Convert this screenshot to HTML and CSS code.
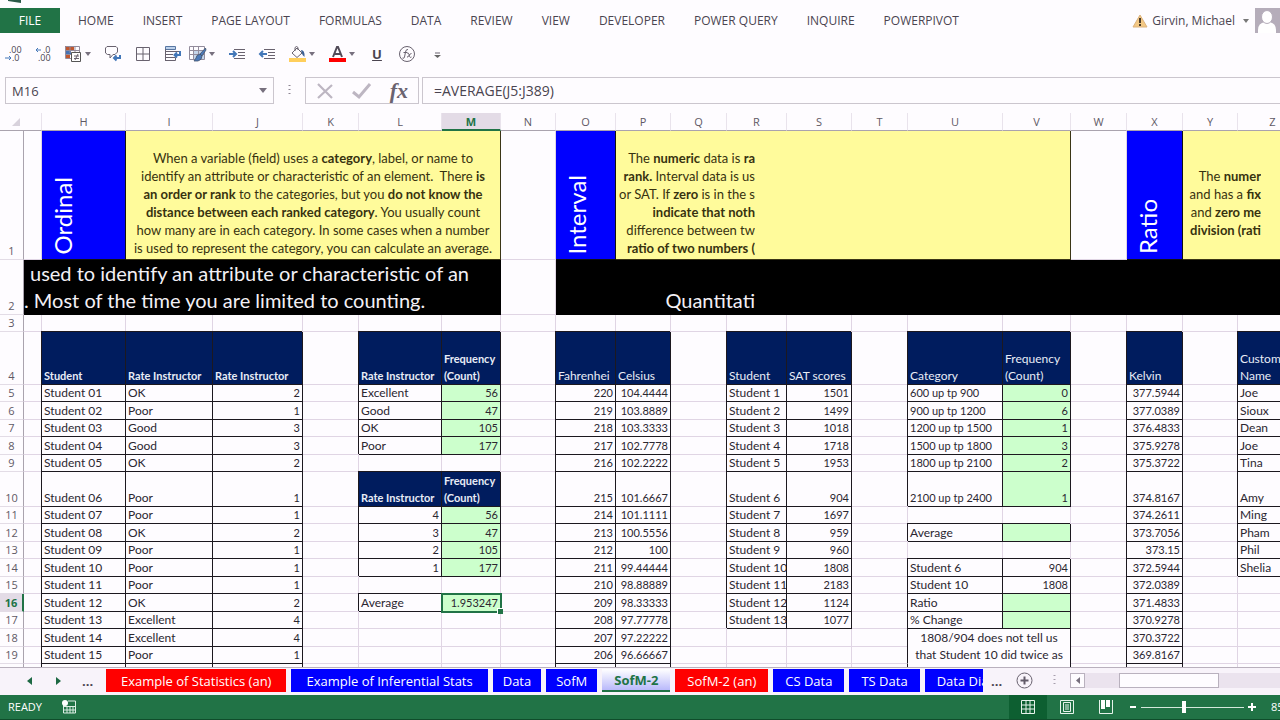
FILE: index.html
```html
<!DOCTYPE html>
<html lang="en">
<head>
<meta charset="utf-8">
<title>Workbook - SofM-2</title>
<link rel="stylesheet" href="styles.css">
</head>
<body>
<header class="ribbon">
  <div class="titlebar"><svg width="14" height="3" viewBox="0 0 14 3"><path d="M0 0h13v3L0 1z" fill="#2b5a48"/></svg></div>
  <div class="ribbon-row">
    <button class="file">FILE</button>
    <nav class="ribbon-tabs">
      <button>HOME</button><button>INSERT</button><button>PAGE LAYOUT</button><button>FORMULAS</button><button>DATA</button><button>REVIEW</button><button>VIEW</button><button>DEVELOPER</button><button>POWER QUERY</button><button>INQUIRE</button><button>POWERPIVOT</button>
    </nav>
    <div class="account">
      <svg width="16" height="14" viewBox="0 0 16 14"><path d="M8 1L15 13H1z" fill="#f3c884" stroke="#dcb27c"/><path d="M7 4h2v5H7zM7 10h2v2H7z" fill="#4a3a28"/></svg>
      <button class="user">Girvin, Michael<svg width="6" height="4" viewBox="0 0 6 4"><path d="M0 0h6L3 4z" fill="#777"/></svg></button>
      <svg class="avatar" width="25" height="25" viewBox="0 0 25 25"><path d="M0 0h25v25H0z" fill="#b5adba"/><path d="M3 25v-3q0-7 7-8h4q7 1 7 8v3z" fill="#fff"/><ellipse cx="12" cy="9" rx="5.500" ry="6.500" fill="#fff" stroke="#b5adba"/></svg>
    </div>
  </div>
  <div class="quick">
    <button aria-label="Decrease decimal"><svg width="16" height="16" viewBox="0 0 16 16"><g class="digits"><text x="4" y="7">.00</text><text x="7" y="15">.0</text></g><path d="M0 12h6M4 10l2 2-2 2" class="blue"/></svg></button>
    <button aria-label="Increase decimal"><svg width="16" height="16" viewBox="0 0 16 16"><g class="digits"><text x="8" y="7">.0</text><text x="3" y="15">.00</text></g><path d="M6 4H1M3 2L1 4l2 2" class="blue"/></svg></button>
    <button class="split" aria-label="Conditional formatting"><svg width="16" height="16" viewBox="0 0 16 16"><path d="M0 0h9v4H0zM0 8h5v4H0z" fill="#c0572f"/><path d="M0 4h6v4H0z" fill="#4573b5"/><path d="M.5.5h14v6M.5.5v12H6M5 0v7M10 0v6M0 4.500h14M0 8.500h6" class="thin"/><path d="M6.500 6.500h9v9h-9z" fill="#fff" stroke="#555"/><path d="M9 10h5M9 12.500h5M13 8l-3 6" class="line"/></svg><i class="caret"></i></button>
    <button aria-label="Comment"><svg width="16" height="16" viewBox="0 0 16 16"><path d="M4 8.500H2.500L.500 7V2L2 .500h9L12.500 2v4L10 8.500H8L5 12V8.500z" class="line"/><path d="M15 9v3H9M11.500 9.500L9 12l2.500 2.500" class="blue bold"/></svg></button>
    <button aria-label="Borders"><svg width="16" height="16" viewBox="0 0 16 16"><path d="M1.500 1.500h13v13h-13zM8 1v14M1 8h14" class="line"/></svg></button>
    <div class="pair">
      <button aria-label="Wrap text"><svg width="16" height="16" viewBox="0 0 16 16"><path d="M.500.500h10v3H.500z" fill="#bcd0ea" stroke="#5876a2"/><path d="M.500 5.500h14M.500 8.500H8M.500 11.500h10v3H.500zM.500 3v12" class="line"/><path d="M15 5v4h-5M12 6.500L9.500 9l2.500 2.500" class="blue bold"/></svg></button>
      <button class="split" aria-label="Format as table"><svg width="18" height="16" viewBox="0 0 18 16"><path d="M.500.500h15v13H.500z" class="thin"/><path d="M4 4h11v9H4z" fill="#c5d5ea"/><path d="M0 4.500h15M4.500 0v14M9.500 0v14M0 8.500h15" class="thin"/><path d="M16.500 2L11 8l2 2 4-6zM11 8q-4 1-4 4l-2 3h4q4-1 4-5z" fill="#4c79b8" stroke="#44546c" stroke-width=".8"/></svg><i class="caret"></i></button>
    </div>
    <button aria-label="Increase indent"><svg width="16" height="16" viewBox="0 0 16 16"><path d="M5 3.500h11M9 6.500h7M9 9.500h7M5 12.500h11" class="line"/><path d="M0 8h7M4 5l3 3-3 3" class="blue bold"/></svg></button>
    <button aria-label="Decrease indent"><svg width="16" height="16" viewBox="0 0 16 16"><path d="M5 3.500h11M9 6.500h7M9 9.500h7M5 12.500h11" class="line"/><path d="M8 8H1M4 5L1 8l3 3" class="blue bold"/></svg></button>
    <button class="split" aria-label="Fill color"><svg width="17" height="16" viewBox="0 0 17 16"><path d="M3 7l5-5 5 5-5 4.500zM6 5V1.500Q7.500-.500 9 1.500V4" class="line"/><path d="M12 4q4 0 3.500 7Q13 9 12.500 6z" fill="#3d6295"/><path d="M0 12h17v4H0z" fill="#ffcf5c"/></svg><i class="caret"></i></button>
    <button class="split" aria-label="Font color"><svg width="17" height="16" viewBox="0 0 17 16"><path d="M4 11L8 1h1l4 10M5.500 8h6" fill="none" stroke="#514b58" stroke-width="2"/><path d="M0 12h17v4H0z" fill="#f00"/></svg><i class="caret"></i></button>
    <button class="underline" aria-label="Underline">U</button>
    <button aria-label="Insert function"><svg width="16" height="16" viewBox="0 0 16 16"><circle cx="8" cy="8" r="7.500" class="line"/><path d="M9 3.500Q7 3 6.500 6L5.500 11Q5 13 3.500 12M4.500 6.500h4M8.500 7.500q1-1 1.500 1l.5 2q.5 1.500 2 .5M12.500 7.500q-1.500 0-2.500 2t-2 1.500" class="line"/></svg></button>
    <button aria-label="Customize toolbar"><svg width="16" height="16" viewBox="0 0 16 16"><path d="M6 7h5" class="line"/><path d="M5 9h7l-3.500 3z" fill="#666"/></svg></button>
  </div>
</header>
<section class="formula-row">
  <div class="namebox"><input type="text" value="M16" aria-label="Name box"><button aria-label="Show names"><svg width="8" height="5" viewBox="0 0 8 5"><path d="M0 0h8L4 5z" fill="#77707e"/></svg></button></div>
  <svg class="grip" width="3" height="14" viewBox="0 0 3 14"><path d="M1.500 1v12" stroke="#8d8693" stroke-width="2" stroke-dasharray="1 3"/></svg>
  <div class="fx-buttons">
    <button aria-label="Cancel"><svg width="18" height="18" viewBox="0 0 18 18"><path d="M2 2l14 14M16 3L2 16" fill="none" stroke="#bdb6c2" stroke-width="2.200"/></svg></button>
    <button aria-label="Enter"><svg width="20" height="18" viewBox="0 0 20 18"><path d="M1 10l6 5L18 2" fill="none" stroke="#bdb6c2" stroke-width="3"/></svg></button>
    <button class="fx" aria-label="Insert function">fx</button>
  </div>
  <input class="formula" type="text" value="=AVERAGE(J5:J389)" aria-label="Formula bar">
</section>
<main class="sheet">
<table>
<colgroup><col class="w24"><col class="w18"><col class="w84"><col class="w87"><col class="w90"><col class="w56"><col class="w83"><col class="w59"><col class="w55"><col class="w60"><col class="w55"><col class="w56"><col class="w60"><col class="w65"><col class="w56"><col class="w95"><col class="w68"><col class="w56"><col class="w56"><col class="w55"><col class="w70"></colgroup>
<thead>
<tr><th class="corner"><svg width="8" height="8" viewBox="0 0 8 8"><path d="M8 0v8H0z" fill="#d8d2dc"/></svg></th><th></th><th>H</th><th>I</th><th>J</th><th>K</th><th>L</th><th class="active">M</th><th>N</th><th>O</th><th>P</th><th>Q</th><th>R</th><th>S</th><th>T</th><th>U</th><th>V</th><th>W</th><th>X</th><th>Y</th><th>Z</th></tr>
</thead>
<tbody>
<tr class="row-notes"><th>1</th><td></td><td class="scale"><span>Ordinal</span></td>
<td class="note" colspan="5">When a variable (field) uses a <b>category</b>, label, or name to<br>identify an attribute or characteristic of an element.&nbsp; There <b>is</b><br><b>an order or rank</b> to the categories, but you <b>do not know the</b><br><b>distance between each ranked category</b>. You usually count<br>how many are in each category. In some cases when a number<br>is used to represent the category, you can calculate an average.</td>
<td></td><td class="scale"><span>Interval</span></td>
<td class="note" colspan="7"><div class="clip clip-interval">The <b>numeric</b> data is <b>ra</b><br><b>rank.</b> Interval data is us<br>or SAT. If <b>zero</b> is in the s<br><b>indicate that noth</b><br>difference between tw<br><b>ratio of two numbers (</b></div></td>
<td></td><td class="scale"><span>Ratio</span></td>
<td class="note" colspan="2"><div class="clip clip-ratio">The <b>numer</b><br>and has a <b>fix</b><br>and <b>zero me</b><br><b>division (rati</b></div></td></tr>
<tr class="row-band"><th>2</th><td class="band" colspan="7"><span class="indent">used to identify an attribute or characteristic of an</span><br>. Most of the time you are limited to counting.</td><td></td><td class="band" colspan="12"><div class="clip clip-band">Quantitati</div></td></tr>
<tr><th>3</th><td></td><td></td><td></td><td></td><td></td><td></td><td></td><td></td><td></td><td></td><td></td><td></td><td></td><td></td><td></td><td></td><td></td><td></td><td></td><td></td></tr>
<tr class="row-head"><th>4</th><td></td><td class="head strong">Student</td><td class="head strong">Rate Instructor</td><td class="head strong">Rate Instructor</td><td></td><td class="head strong">Rate Instructor</td><td class="head strong">Frequency<br>(Count)</td><td></td><td class="head">Fahrenhei</td><td class="head">Celsius</td><td></td><td class="head">Student</td><td class="head">SAT scores</td><td></td><td class="head">Category</td><td class="head">Frequency<br>(Count)</td><td></td><td class="head">Kelvin</td><td></td><td class="head">Customer<br>Name</td></tr>
<tr><th>5</th><td></td><td class="box">Student 01</td><td class="box">OK</td><td class="box num">2</td><td></td><td class="box">Excellent</td><td class="box num calc">56</td><td></td><td class="box num">220</td><td class="box num">104.4444</td><td></td><td class="box">Student 1</td><td class="box num">1501</td><td></td><td class="box range">600 up tp 900</td><td class="box num calc">0</td><td></td><td class="box num">377.5944</td><td></td><td class="box">Joe</td></tr>
<tr><th>6</th><td></td><td class="box">Student 02</td><td class="box">Poor</td><td class="box num">1</td><td></td><td class="box">Good</td><td class="box num calc">47</td><td></td><td class="box num">219</td><td class="box num">103.8889</td><td></td><td class="box">Student 2</td><td class="box num">1499</td><td></td><td class="box range">900 up tp 1200</td><td class="box num calc">6</td><td></td><td class="box num">377.0389</td><td></td><td class="box">Sioux</td></tr>
<tr><th>7</th><td></td><td class="box">Student 03</td><td class="box">Good</td><td class="box num">3</td><td></td><td class="box">OK</td><td class="box num calc">105</td><td></td><td class="box num">218</td><td class="box num">103.3333</td><td></td><td class="box">Student 3</td><td class="box num">1018</td><td></td><td class="box range">1200 up tp 1500</td><td class="box num calc">1</td><td></td><td class="box num">376.4833</td><td></td><td class="box">Dean</td></tr>
<tr><th>8</th><td></td><td class="box">Student 04</td><td class="box">Good</td><td class="box num">3</td><td></td><td class="box">Poor</td><td class="box num calc">177</td><td></td><td class="box num">217</td><td class="box num">102.7778</td><td></td><td class="box">Student 4</td><td class="box num">1718</td><td></td><td class="box range">1500 up tp 1800</td><td class="box num calc">3</td><td></td><td class="box num">375.9278</td><td></td><td class="box">Joe</td></tr>
<tr><th>9</th><td></td><td class="box">Student 05</td><td class="box">OK</td><td class="box num">2</td><td></td><td></td><td></td><td></td><td class="box num">216</td><td class="box num">102.2222</td><td></td><td class="box">Student 5</td><td class="box num">1953</td><td></td><td class="box range">1800 up tp 2100</td><td class="box num calc">2</td><td></td><td class="box num">375.3722</td><td></td><td class="box">Tina</td></tr>
<tr class="row-tall"><th>10</th><td></td><td class="box">Student 06</td><td class="box">Poor</td><td class="box num">1</td><td></td><td class="head strong">Rate Instructor</td><td class="head strong">Frequency<br>(Count)</td><td></td><td class="box num">215</td><td class="box num">101.6667</td><td></td><td class="box">Student 6</td><td class="box num">904</td><td></td><td class="box range">2100 up tp 2400</td><td class="box num calc">1</td><td></td><td class="box num">374.8167</td><td></td><td class="box">Amy</td></tr>
<tr><th>11</th><td></td><td class="box">Student 07</td><td class="box">Poor</td><td class="box num">1</td><td></td><td class="box num">4</td><td class="box num calc">56</td><td></td><td class="box num">214</td><td class="box num">101.1111</td><td></td><td class="box">Student 7</td><td class="box num">1697</td><td></td><td></td><td></td><td></td><td class="box num">374.2611</td><td></td><td class="box">Ming</td></tr>
<tr><th>12</th><td></td><td class="box">Student 08</td><td class="box">OK</td><td class="box num">2</td><td></td><td class="box num">3</td><td class="box num calc">47</td><td></td><td class="box num">213</td><td class="box num">100.5556</td><td></td><td class="box">Student 8</td><td class="box num">959</td><td></td><td class="box">Average</td><td class="box calc"></td><td></td><td class="box num">373.7056</td><td></td><td class="box">Pham</td></tr>
<tr><th>13</th><td></td><td class="box">Student 09</td><td class="box">Poor</td><td class="box num">1</td><td></td><td class="box num">2</td><td class="box num calc">105</td><td></td><td class="box num">212</td><td class="box num">100</td><td></td><td class="box">Student 9</td><td class="box num">960</td><td></td><td></td><td></td><td></td><td class="box num">373.15</td><td></td><td class="box">Phil</td></tr>
<tr><th>14</th><td></td><td class="box">Student 10</td><td class="box">Poor</td><td class="box num">1</td><td></td><td class="box num">1</td><td class="box num calc">177</td><td></td><td class="box num">211</td><td class="box num">99.44444</td><td></td><td class="box">Student 10</td><td class="box num">1808</td><td></td><td class="box">Student 6</td><td class="box num">904</td><td></td><td class="box num">372.5944</td><td></td><td class="box">Shelia</td></tr>
<tr><th>15</th><td></td><td class="box">Student 11</td><td class="box">Poor</td><td class="box num">1</td><td></td><td></td><td></td><td></td><td class="box num">210</td><td class="box num">98.88889</td><td></td><td class="box">Student 11</td><td class="box num">2183</td><td></td><td class="box">Student 10</td><td class="box num">1808</td><td></td><td class="box num">372.0389</td><td></td><td></td></tr>
<tr><th class="active">16</th><td></td><td class="box">Student 12</td><td class="box">OK</td><td class="box num">2</td><td></td><td class="box">Average</td><td class="box num calc selected">1.953247</td><td></td><td class="box num">209</td><td class="box num">98.33333</td><td></td><td class="box">Student 12</td><td class="box num">1124</td><td></td><td class="box">Ratio</td><td class="box calc"></td><td></td><td class="box num">371.4833</td><td></td><td></td></tr>
<tr><th>17</th><td></td><td class="box">Student 13</td><td class="box">Excellent</td><td class="box num">4</td><td></td><td></td><td></td><td></td><td class="box num">208</td><td class="box num">97.77778</td><td></td><td class="box">Student 13</td><td class="box num">1077</td><td></td><td class="box">% Change</td><td class="box calc"></td><td></td><td class="box num">370.9278</td><td></td><td></td></tr>
<tr><th>18</th><td></td><td class="box">Student 14</td><td class="box">Excellent</td><td class="box num">4</td><td></td><td></td><td></td><td></td><td class="box num">207</td><td class="box num">97.22222</td><td></td><td></td><td></td><td class="edge"></td><td class="box remark" colspan="2" rowspan="3">1808/904 does not tell us<br>that Student 10 did twice as</td><td></td><td class="box num">370.3722</td><td></td><td></td></tr>
<tr><th>19</th><td></td><td class="box">Student 15</td><td class="box">Poor</td><td class="box num">1</td><td></td><td></td><td></td><td></td><td class="box num">206</td><td class="box num">96.66667</td><td></td><td></td><td></td><td class="edge"></td><td></td><td class="box num">369.8167</td><td></td><td></td></tr>
<tr><th></th><td></td><td class="box"></td><td class="box"></td><td class="box"></td><td></td><td></td><td></td><td></td><td class="box"></td><td class="box"></td><td></td><td></td><td></td><td class="edge"></td><td></td><td class="box"></td><td></td><td></td></tr>
</tbody>
</table>
</main>
<nav class="sheetbar">
  <div class="sheet-nav">
    <button aria-label="Previous sheet"><svg width="5" height="8" viewBox="0 0 5 8"><path d="M5 0v8L0 4z" fill="#1d6843"/></svg></button>
    <button aria-label="Next sheet"><svg width="5" height="8" viewBox="0 0 5 8"><path d="M0 0v8l5-4z" fill="#1d6843"/></svg></button>
    <button class="more">...</button>
  </div>
  <div class="tabs">
    <button class="tab red wide">Example of Statistics (an)</button><button class="tab wide">Example of Inferential Stats</button><button class="tab">Data</button><button class="tab">SofM</button><button class="tab medium current">SofM-2</button><button class="tab medium red">SofM-2 (an)</button><button class="tab medium">CS Data</button><button class="tab medium">TS Data</button><button class="tab medium">Data Diagram</button>
  </div>
  <div class="sheet-end">
    <button class="more">...</button>
    <button aria-label="New sheet"><svg width="17" height="17" viewBox="0 0 17 17"><circle cx="8.500" cy="8.500" r="7.500" class="line"/><path d="M8.500 4.500v8M4.500 8.500h8" fill="none" stroke="#625b69" stroke-width="2"/></svg></button>
    <svg class="divider" width="3" height="14" viewBox="0 0 3 14"><path d="M1.500 1v12" stroke="#a79fad" stroke-width="2" stroke-dasharray="1 3"/></svg>
    <div class="scrollbar"><button aria-label="Scroll left"><svg width="4" height="7" viewBox="0 0 4 7"><path d="M4 0v7L0 3.500z" fill="#77707e"/></svg></button><div class="track"><div class="thumb"></div></div></div>
  </div>
</nav>
<footer class="status">
  <span>READY</span>
  <svg class="macro" width="14" height="14" viewBox="0 0 14 14"><path d="M1.500 4v9h12V1H6M2 6.500h11M5 6v7M8 6v7M11 6v7M2 10h11" fill="none" stroke="#dceee4"/><circle cx="3" cy="3" r="3" fill="#fff"/></svg>
  <div class="views">
    <button class="on" aria-label="Normal"><svg width="14" height="14" viewBox="0 0 14 14"><path d="M.500.500h13v13H.500zM5 0v14M9 0v14M0 5h14M0 9h14" class="white"/></svg></button>
    <button aria-label="Page layout"><svg width="14" height="14" viewBox="0 0 14 14"><path d="M.500.500h13v13H.500zM3.500 2.500h7v9h-7zM5 5h4M5 7h4M5 9h4" class="white"/></svg></button>
    <button aria-label="Page break preview"><svg width="14" height="14" viewBox="0 0 14 14"><path d="M.500 0v13.500h13V0" class="white"/><path d="M2 0h4v9H2zM7 0h4v7H7z" fill="#fff"/></svg></button>
  </div>
  <div class="zoom">
    <button aria-label="Zoom out"><svg width="8" height="8" viewBox="0 0 8 8"><path d="M1 4h6" stroke="#fff" stroke-width="2"/></svg></button><input type="range" min="0" max="100" value="41" aria-label="Zoom"><button aria-label="Zoom in"><svg width="8" height="8" viewBox="0 0 8 8"><path d="M0 4h8M4 0v8" stroke="#fff" stroke-width="2"/></svg></button>
    <span class="percent">85%</span>
  </div>
</footer>
</body>
</html>
```
FILE: styles.css
```css
* { box-sizing: border-box; }
body {
  margin: 0;
  height: 100vh;
  display: flex;
  flex-direction: column;
  overflow: hidden;
  background: #fefcff;
  color: #4a4450;
  font: 12px/16px "Open Sans", "Noto Sans", sans-serif;
}
button, input { font: inherit; color: inherit; border: 0; padding: 0; margin: 0; background: none; }
button { display: flex; align-items: center; justify-content: center; white-space: nowrap; }
svg { display: block; flex: none; overflow: visible; }

.line { fill: none; stroke: #69626f; }
.thin { fill: none; stroke: #938c9c; }
.blue { fill: none; stroke: #4377b8; }
.bold { stroke-width: 2; }
.white { fill: none; stroke: #e6f3eb; }
.digits { font-size: 9px; fill: #4a4450; }

/* Ribbon */
.ribbon { flex: none; }
.titlebar { height: 8px; padding-left: 8px; overflow: hidden; }
.ribbon-row { display: flex; height: 25px; align-items: stretch; }
.file { width: 60px; background: #217346; color: #fff; }
.ribbon-tabs { display: flex; gap: 29px; padding-left: 18px; }
.account { display: flex; align-items: center; margin-left: auto; gap: 4px; }
.user { gap: 8px; }
.avatar { margin-left: 2px; }
.quick { display: flex; align-items: center; height: 44px; gap: 14px; padding-left: 5px; padding-bottom: 2px; }
.quick button { width: 16px; height: 20px; }
.quick .split { width: 26px; justify-content: space-between; }
.quick .underline { font-weight: 700; font-size: 13px; text-decoration: underline; }
.pair { display: flex; gap: 8px; }
.caret { border: 3px solid transparent; border-top: 4px solid #77707e; border-bottom: 0; }

/* Formula bar */
.formula-row { flex: none; display: flex; align-items: center; height: 27px; margin-bottom: 9px; padding-left: 5px; font-size: 14px; }
.namebox { display: flex; align-items: center; width: 269px; height: 27px; border: 1px solid #cbc6ce; }
.namebox input { flex: 1; min-width: 0; padding-left: 6px; font-size: 13px; }
.namebox button { width: 20px; }
.grip { margin: 0 14px; }
.fx-buttons { display: flex; align-items: center; justify-content: space-between; width: 114px; height: 27px; padding: 0 10px; border: 1px solid #cbc6ce; }
.fx { font: italic bold 22px/24px "Liberation Serif", serif; color: #6a6370; }
.formula { flex: 1; height: 27px; margin-left: 3px; padding-left: 11px; border: 1px solid #cbc6ce; border-right: 0; }

/* Worksheet grid */
.sheet { flex: 1; min-height: 0; overflow: hidden; }
table { table-layout: fixed; width: 0; border-collapse: separate; border-spacing: 0; }
.w18 { width: 18px; } .w24 { width: 24px; } .w55 { width: 55px; } .w56 { width: 56px; }
.w59 { width: 59px; } .w60 { width: 60px; } .w65 { width: 65px; } .w68 { width: 68px; }
.w70 { width: 70px; } .w83 { width: 83px; } .w84 { width: 84px; } .w87 { width: 87px; }
.w90 { width: 90px; } .w95 { width: 95px; }
th { padding: 0; font-weight: 400; font-size: 11px; line-height: 16px; vertical-align: bottom; color: #5f5965; border-bottom: 1px solid #e3dce6; }
thead tr { height: 18px; }
thead th { border-right: 1px solid #e9e3ec; border-bottom: 1px solid #aaa3ae; }
thead .corner { border-right: 0; }
.corner svg { margin: 0 4px 4px auto; }
thead .active { background: #e3dbe6; color: #217346; font-weight: 700; border-bottom: 2px solid #217346; line-height: 15px; }
tbody th { border-right: 1px solid #aaa3ae; }
tbody .active { background: #e3dbe6; color: #217346; font-weight: 700; border-right: 2px solid #217346; }
tbody tr { height: 17px; }
tbody tr:nth-child(2n+6) { height: 18px; }
td {
  padding: 0 2px;
  overflow: hidden;
  white-space: nowrap;
  vertical-align: bottom;
  font: 12px/16px Lato, sans-serif;
  color: #2b2630;
  border-right: 1px solid #e0d5e4;
  border-bottom: 1px solid #e0d5e4;
}
.box, .head { border-color: #1c181f; box-shadow: -1px -1px 0 #1c181f; }
.edge { border-right-color: #1c181f; }
.head { background: #001c5e; color: #e8ecf6; line-height: 17px; }
.strong { font-weight: 700; font-size: 11px; }
.num, .range { font-size: 11px; }
.num { text-align: right; }
.calc { background: #ccffcc; }
.selected { position: relative; overflow: visible; outline: 2px solid #217346; outline-offset: -1px; }
.selected::after { content: ""; position: absolute; right: -3px; bottom: -3px; width: 5px; height: 5px; background: #217346; border: solid #fff; border-width: 1px 0 0 1px; }
.remark { text-align: center; vertical-align: top; line-height: 17px; }

tbody .row-notes { height: 129px; }
tbody .row-band { height: 55px; }
tbody .row-head { height: 53px; }
tbody tr.row-tall { height: 35px; }
.scale { background: #00f; border-color: #111; padding: 0 0 5px 7px; }
.scale span { display: block; writing-mode: vertical-rl; transform: rotate(180deg); color: #fff; font-size: 24px; line-height: 28px; }
.note { background: #fffb9b; border-color: #3b3516; padding: 15px 0 0; text-align: center; vertical-align: middle; font-size: 13px; line-height: 18px; color: #37320f; }
.clip { overflow: hidden; text-align: right; }
.clip-interval { width: 139px; }
.clip-ratio { width: 78px; }
.clip-band { width: 199px; }
.band { background: #000; border-color: #000; color: #f3f0f5; font-size: 20px; line-height: 27px; padding: 0; }
.indent { padding-left: 6px; }

/* Sheet tabs */
.sheetbar { flex: none; display: flex; align-items: center; height: 28px; padding-bottom: 2px; border-top: 1px solid #b9b0bd; background: #f8f3fa; font-size: 13px; }
.sheet-nav { display: flex; align-items: center; gap: 24px; width: 106px; padding-left: 27px; flex: none; }
.sheet-nav .more { margin-left: -3px; }
.more { font-weight: 700; }
.tabs { display: flex; gap: 5px; flex: 1; min-width: 0; overflow: hidden; }
.tab { flex: none; height: 23px; padding: 0 10px; background: #00f; color: #fff; }
.wide { padding: 0 15px; }
.medium { padding: 0 12px; }
.red { background: #f00; }
.current { background: linear-gradient(#fff, #b9b9fb); color: #217346; font-weight: 700; border-bottom: 2px solid #217346; }
.sheet-end { display: flex; align-items: center; flex: none; width: 297px; padding-left: 8px; gap: 14px; }
.divider { margin-left: 6px; }
.scrollbar { display: flex; flex: 1; height: 15px; }
.scrollbar button { width: 15px; border: 1px solid #b9b1be; background: #fefcff; }
.track { flex: 1; padding-left: 34px; background: #ebe3ee; }
.thumb { width: 100px; height: 15px; border: 1px solid #b9b1be; background: #fefcff; }

/* Status bar */
.status { flex: none; display: flex; align-items: center; height: 25px; padding-left: 8px; background: #217346; border-bottom: 1px solid #0f4d2b; color: #fff; font-size: 11px; overflow: hidden; }
.macro { margin-left: 20px; }
.views { display: flex; align-self: stretch; gap: 1px; margin-left: auto; }
.views button { width: 38px; }
.views .on { background: #0d5f31; }
.zoom { display: flex; align-items: center; }
.zoom button { width: 16px; height: 14px; }
.zoom input { appearance: none; width: 103px; height: 14px; background: linear-gradient(#d4e8dc, #d4e8dc) center / 100% 1px no-repeat; }
.zoom input::-webkit-slider-thumb { appearance: none; width: 4px; height: 12px; background: #fff; }
.percent { width: 9px; margin-left: 11px; overflow: hidden; }
```
